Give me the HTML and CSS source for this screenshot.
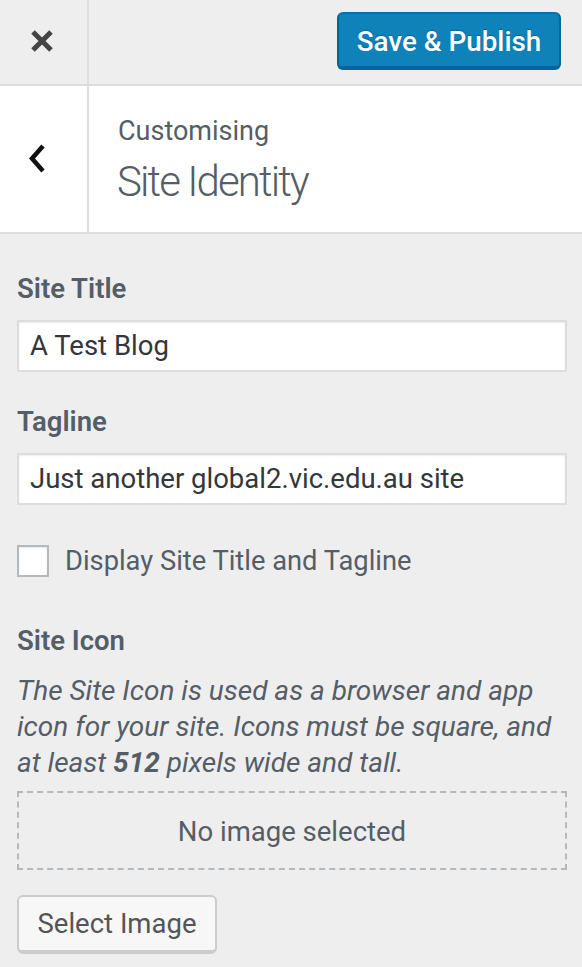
FILE: index.html
```html
<!DOCTYPE html>
<html lang="en">
<head>
<meta charset="utf-8">
<title>Customising Site Identity</title>
<link rel="stylesheet" href="styles.css">
</head>
<body>
<div class="pane">
  <header class="topbar">
    <button class="close" aria-label="Close">
      <svg width="24" height="24" viewBox="0 0 24 24"><path d="M3 3 L21 21 M21 3 L3 21" stroke="#444" stroke-width="5" stroke-linecap="butt"/></svg>
    </button>
    <div class="actions">
      <button class="btn-primary">Save &amp; Publish</button>
    </div>
  </header>
  <section class="section-title">
    <button class="back" aria-label="Back">
      <svg width="20" height="30" viewBox="0 0 20 30"><path d="M15 2 L4 14.5 L15 27" fill="none" stroke="#111" stroke-width="4.5" stroke-linejoin="miter"/></svg>
    </button>
    <div class="titles">
      <div class="crumb">Customising</div>
      <h1 class="title">Site Identity</h1>
    </div>
  </section>
  <main class="controls">
    <div class="control">
      <label class="control-title">Site Title</label>
      <div class="input">A Test Blog</div>
    </div>
    <div class="control gap-33">
      <label class="control-title">Tagline</label>
      <div class="input">Just another global2.vic.edu.au site</div>
    </div>
    <div class="check-row">
      <span class="checkbox"></span>
      <span class="check-label">Display Site Title and Tagline</span>
    </div>
    <div class="control site-icon">
      <label class="control-title">Site Icon</label>
      <p class="desc">The Site Icon is used as a browser and app icon for your site. Icons must be square, and at least <b class="num">512</b> pixels wide and tall.</p>
      <div class="placeholder">No image selected</div>
      <button class="btn-secondary">Select Image</button>
    </div>
  </main>
</div>
</body>
</html>
```

FILE: styles.css
```css
* { box-sizing: border-box; }
html, body { margin: 0; padding: 0; }
body {
  background: #eeeeee;
  font-family: Roboto, "Noto Sans", "Liberation Sans", sans-serif;
  color: #555d66;
}
button { font-family: inherit; margin: 0; }

.topbar {
  display: flex;
  height: 86px;
  border-bottom: 2px solid #dddddd;
  background: #eeeeee;
}
.close {
  width: 89px;
  border: 0;
  border-right: 2px solid #dddddd;
  background: transparent;
  display: flex;
  align-items: center;
  justify-content: center;
  padding: 0 4px 2px 0;
}
.actions {
  flex: 1;
  display: flex;
  justify-content: flex-end;
  align-items: flex-start;
  padding: 12px 21px 0 0;
}
.btn-primary {
  height: 58px;
  width: 224px;
  background: #0e82b9;
  color: #ffffff;
  border-style: solid;
  border-width: 2px 2px 4px;
  border-color: #0073aa #006799 #006799;
  border-radius: 6px;
  font-size: 27.8px;
  font-weight: 500;
  line-height: 1;
  padding: 3px 0 0;
  text-shadow: 0 -1px 1px #006799;
}

.section-title {
  display: flex;
  background: #ffffff;
  border-bottom: 2px solid #dddddd;
  height: 148px;
}
.back {
  width: 89px;
  border: 0;
  border-right: 2px solid #dddddd;
  background: transparent;
  display: flex;
  align-items: center;
  justify-content: center;
  padding: 0 12px 0 0;
}
.titles {
  padding: 29px 0 0 29px;
}
.crumb {
  font-size: 27px;
  line-height: 32px;
  color: #555d66;
}
.title {
  margin: 11px 0 0 -1px;
  font-size: 42px;
  line-height: 48px;
  font-weight: 300;
  letter-spacing: -1.9px;
  color: #555d66;
}

.controls {
  padding: 39px 15px 40px 17px;
}
.control-title {
  display: block;
  font-size: 27.5px;
  line-height: 32px;
  font-weight: 600;
  color: #555d66;
  margin-bottom: 15px;
}
.input {
  height: 52px;
  background: #ffffff;
  border: 2px solid #dddddd;
  box-shadow: inset 0 1px 2px rgba(0,0,0,0.07);
  padding: 0 11px;
  font-size: 27.5px;
  line-height: 48px;
  color: #32373c;
  white-space: nowrap;
}
.gap-33 { margin-top: 34px; }

.check-row {
  display: flex;
  align-items: center;
  gap: 16px;
  margin-top: 40px;
  height: 32px;
}
.checkbox {
  width: 32px;
  height: 32px;
  flex: none;
  background: #ffffff;
  border: 2px solid #b4b9be;
  box-shadow: inset 0 1px 2px rgba(0,0,0,0.1);
}
.check-label {
  font-size: 27.3px;
  line-height: 32px;
  color: #555d66;
}

.site-icon { margin-top: 48px; }
.desc {
  margin: 0;
  padding-top: 1px;
  font-style: italic;
  font-size: 28px;
  line-height: 36px;
  color: #555d66;
}
.num { font-weight: 700; }
.placeholder {
  margin-top: 10px;
  height: 79px;
  border: 2px dashed #b4b9be;
  display: flex;
  align-items: center;
  justify-content: center;
  font-size: 27.5px;
  color: #555d66;
  padding-top: 1px;
}
.btn-secondary {
  margin-top: 25px;
  height: 59px;
  width: 200px;
  background: #f7f7f7;
  border-style: solid;
  border-width: 2px 2px 4px;
  border-color: #cccccc;
  border-radius: 6px;
  font-size: 27.5px;
  color: #555555;
  padding: 1px 0 0;
  line-height: 1;
}
```
